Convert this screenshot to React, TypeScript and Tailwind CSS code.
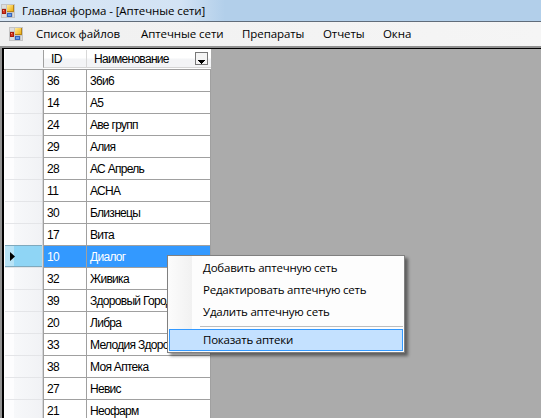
type Row = { id: number; name: string };

const rows: Row[] = [
  { id: 36, name: '36и6' },
  { id: 14, name: 'А5' },
  { id: 24, name: 'Аве групп' },
  { id: 29, name: 'Алия' },
  { id: 28, name: 'АС Апрель' },
  { id: 11, name: 'АСНА' },
  { id: 30, name: 'Близнецы' },
  { id: 17, name: 'Вита' },
  { id: 10, name: 'Диалог' },
  { id: 32, name: 'Живика' },
  { id: 39, name: 'Здоровый Город' },
  { id: 20, name: 'Либра' },
  { id: 33, name: 'Мелодия Здоровья' },
  { id: 38, name: 'Моя Аптека' },
  { id: 27, name: 'Невис' },
  { id: 21, name: 'Неофарм' },
];

const SELECTED = 10;

function FormIcon() {
  return (
    <svg width="14" height="14" viewBox="0 0 14 14" className="block shrink-0" shapeRendering="crispEdges">
      <defs>
        <linearGradient id="gold" x1="0" y1="0" x2="1" y2="1">
          <stop offset="0" stopColor="#ffeb9a" />
          <stop offset="1" stopColor="#f0b010" />
        </linearGradient>
      </defs>
      <rect width="14" height="14" fill="#c4c4c4" />
      <rect x="1" y="1" width="4" height="3" fill="#dedede" />
      <rect x="1" y="10" width="4" height="3" fill="#dcdcdc" />
      <rect x="12" y="9" width="1" height="4" fill="#dcdcdc" />
      <rect x="1" y="5" width="4" height="5" fill="#a61c0c" />
      <rect x="2" y="6" width="2" height="3" fill="#d83a20" />
      <rect x="2" y="6" width="1" height="1" fill="#f4a080" />
      <rect x="6" y="1" width="7" height="7" fill="#b78416" />
      <rect x="6" y="1" width="6" height="6" fill="url(#gold)" />
      <rect x="6" y="9" width="5" height="4" fill="#3465bd" />
      <rect x="7" y="10" width="3" height="2" fill="#6a9cea" />
    </svg>
  );
}

const menuFont = "font-['Open_Sans','Noto_Sans',sans-serif] text-[11.5px] leading-[16px] text-black whitespace-nowrap";

function MenuItem({ label, box }: { label: string; box: string }) {
  return <span className={`${box} shrink-0 tracking-[-0.08px]`}>{label}</span>;
}

function ContextItem({ label }: { label: string }) {
  return <div className="flex h-[22px] items-center pl-[35px] tracking-[-0.22px]">{label}</div>;
}

export default function App() {
  return (
    <div className="relative flex h-[418px] w-[541px] flex-col overflow-hidden bg-[#ababab]">
      <div className={`flex h-[21px] shrink-0 items-center bg-[linear-gradient(90deg,#d9e7f5_0px,#d3e3f4_180px,#b2cfea_225px,#b2cfea_100%)] pl-px pt-px ${menuFont}`}>
        <FormIcon />
        <span className="ml-[7px] tracking-[-0.1px]">Главная форма - [Аптечные сети]</span>
      </div>
      <div className={`flex h-[25px] shrink-0 items-center border-t border-[#606c7a] bg-[linear-gradient(90deg,#f0f0f0,#f5f5f5)] pl-[9px] ${menuFont}`}>
        <FormIcon />
        <div className="ml-[13px] flex">
          <MenuItem label="Список файлов" box="w-[105px]" />
          <MenuItem label="Аптечные сети" box="w-[101px]" />
          <MenuItem label="Препараты" box="w-[81px]" />
          <MenuItem label="Отчеты" box="w-[60px]" />
          <MenuItem label="Окна" box="w-[40px]" />
        </div>
      </div>
      <div className="flex min-h-0 flex-1 border-l-2 border-t-2 border-[#919191]">
        <div className="min-w-0 flex-1 border-l-2 border-t border-black">
          <div className="flex w-[207px] flex-col overflow-hidden bg-white font-['Liberation_Sans',Arial,sans-serif] text-[12px] leading-[14px] text-black">
            <div className="flex h-[21px] shrink-0 border-b border-t border-b-[#a0a0a0] border-t-white pl-px">
              <div className="w-[38px] bg-[#f6f7f9]" />
              <div className="flex h-[18px] w-[43px] items-center border-b border-l border-b-[#d5d5d5] border-l-[#a0a0a0] bg-[linear-gradient(#fff_45%,#f3f4f6_55%)] pl-[7px] tracking-[-0.6px]">ID</div>
              <div className="flex h-[18px] w-[125px] items-center justify-between border-b border-l border-b-[#d5d5d5] border-l-[#d8d8d8] bg-[linear-gradient(#fff_45%,#f3f4f6_55%)] pl-[7px] pr-[3px]">
                <span className="tracking-[-0.7px]">Наименование</span>
                <svg width="13" height="13" viewBox="0 0 13 13" shapeRendering="crispEdges">
                  <rect x=".5" y=".5" width="12" height="12" fill="#f4f4f4" stroke="#777" />
                  <path d="M3 8h7v1H3zM4 9h5v1H4zM5 10h3v1H5zM6 11h1v1H6z" fill="#000" />
                </svg>
              </div>
            </div>
            {rows.map((r, i) => {
              const on = r.id === SELECTED;
              return (
                <div key={r.id} className={`flex shrink-0 pl-px ${i === 0 ? 'h-[21px]' : 'h-[22px]'}`}>
                  <div className={`flex w-[37px] items-center pl-[5px] ${i === 0 ? '' : 'border-t'} ${on ? 'border-b border-[#7fa9bd] bg-[linear-gradient(90deg,#b8e3f6_9px,#8fd5f5_9px)]' : 'border-[#e4e5e8] bg-[linear-gradient(90deg,#fdfdfe_9px,#f7f8fa_9px,#f1f2f5)]'}`}>
                    {on && (
                      <svg width="5" height="9" viewBox="0 0 5 9"><path d="M0 0L5 4.5L0 9z" fill="#000" /></svg>
                    )}
                  </div>
                  <div className="w-px bg-[#d4d5d8]" />
                  <div className={`flex w-[43px] items-center border-l border-[#a0a0a0] pl-[3px] tracking-[-0.6px] ${i === 0 ? '' : 'border-t'} ${on ? 'bg-[#3399ff] text-white' : 'bg-white'}`}>{r.id}</div>
                  <div className={`flex w-[125px] items-center whitespace-nowrap border-x border-[#a0a0a0] pl-[3px] tracking-[-0.7px] ${i === 0 ? '' : 'border-t'} ${on ? 'bg-[#3399ff] text-white' : 'bg-white'}`}>{r.name}</div>
                </div>
              );
            })}
          </div>
        </div>
      </div>
      <div className={`absolute left-[167px] top-[255px] flex h-[98px] w-[238px] flex-col border border-[#808080] bg-[linear-gradient(90deg,#fcfcfc_0px,#f1f1f1_24px,#fdfdfd_24px)] pt-px shadow-[3px_3px_3px_rgba(0,0,0,0.45)] ${menuFont}`}>
        <ContextItem label="Добавить аптечную сеть" />
        <ContextItem label="Редактировать аптечную сеть" />
        <ContextItem label="Удалить аптечную сеть" />
        <div className="ml-[32px] mr-px mt-[3px] h-px bg-[#bdbdbd]" />
        <div className="mx-px mt-[2px] flex h-[22px] items-center border border-[#3399ff] bg-[#c4e1ff] pl-[33px] tracking-[-0.22px]">Показать аптеки</div>
      </div>
    </div>
  );
}
